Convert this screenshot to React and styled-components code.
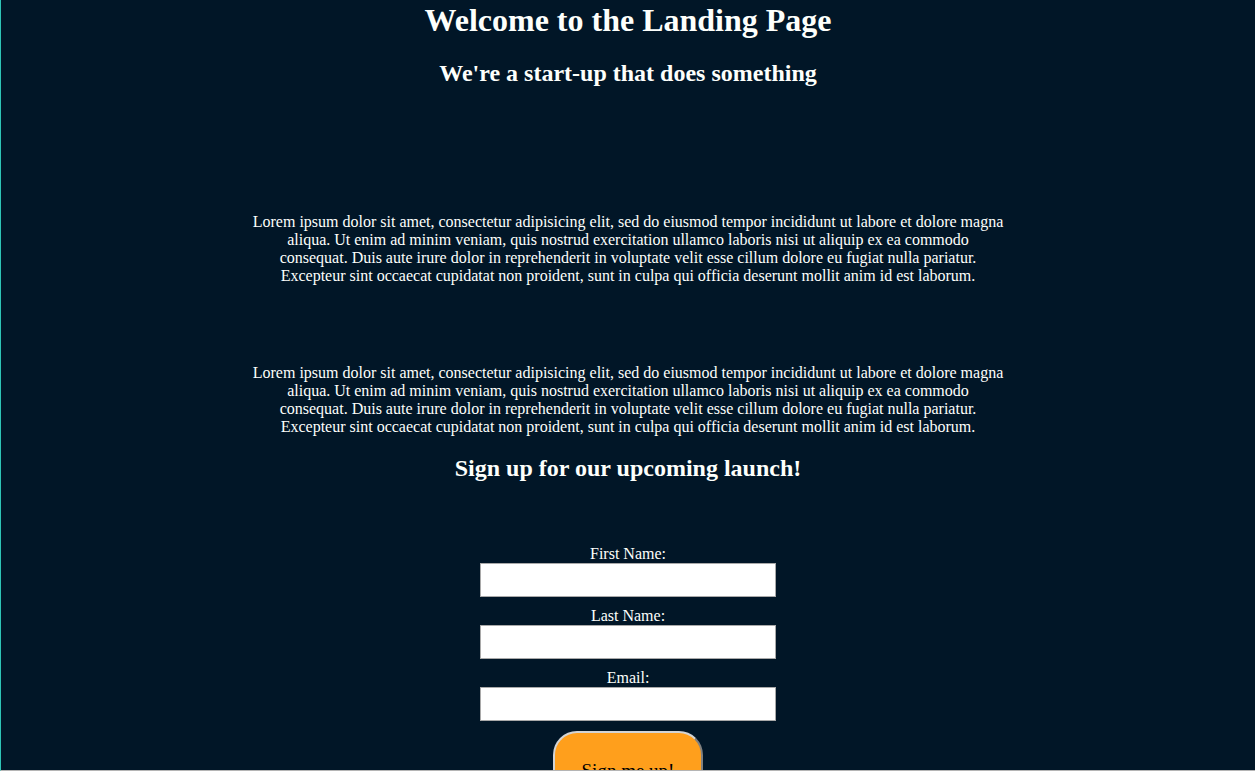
import React from 'react'
import styled, { createGlobalStyle } from 'styled-components'

const colors = {
  navy: '#011627',
  white: '#fdfffc',
  teal: '#2ec4b6',
  orange: '#ff9f1c'
}

const GlobalStyle = createGlobalStyle`
  html {
    height: 100%;
    overflow: hidden;
  }

  body {
    margin: 0;
    height: 100%;
    box-sizing: border-box;
    overflow: hidden;
    background-color: ${colors.navy};
    border-left: 1px solid ${colors.teal};
    border-bottom: 1px solid #b5b5b5;
    color: ${colors.white};
    font-family: 'Liberation Serif', 'Times New Roman', serif;
  }
`

const Page = styled.main`
  display: flex;
  flex-direction: column;
  align-items: center;
  text-align: center;
  padding-top: 2px;
`

const Title = styled.h1`
  font-size: 32px;
  margin: 0;
`

const Subtitle = styled.h2`
  font-size: 24px;
  margin: ${({ top }) => top} 0 0;
`

const Text = styled.p`
  width: 60%;
  font-size: 16px;
  margin: ${({ top }) => top} 0 0;
`

const Form = styled.form`
  display: flex;
  flex-direction: column;
  align-items: center;
  margin-top: 63px;
`

const Field = styled.div`
  display: flex;
  flex-direction: column;
  align-items: center;
  margin-bottom: 10px;
`

const Label = styled.label`
  font-size: 16px;
`

const Input = styled.input`
  box-sizing: border-box;
  width: 296px;
  height: 34px;
  border: 1px solid #a9a9a9;
  background: #ffffff;
  outline: none;
`

const Button = styled.button`
  background-color: ${colors.orange};
  border: 2px outset #d4d4d4;
  border-radius: 24px;
  color: #000000;
  font-family: inherit;
  font-size: 19px;
  padding: 27px 27px 26px;
  cursor: pointer;
`

const lorem =
  'Lorem ipsum dolor sit amet, consectetur adipisicing elit, sed do eiusmod tempor incididunt ut labore et dolore magna aliqua. Ut enim ad minim veniam, quis nostrud exercitation ullamco laboris nisi ut aliquip ex ea commodo consequat. Duis aute irure dolor in reprehenderit in voluptate velit esse cillum dolore eu fugiat nulla pariatur. Excepteur sint occaecat cupidatat non proident, sunt in culpa qui officia deserunt mollit anim id est laborum.'

const fields = [
  { id: 'first', label: 'First Name:', type: 'text' },
  { id: 'last', label: 'Last Name:', type: 'text' },
  { id: 'email', label: 'Email:', type: 'email' }
]

export default function App() {
  return (
    <>
      <GlobalStyle />
      <Page>
        <Title>Welcome to the Landing Page</Title>
        <Subtitle top="21.44px">We're a start-up that does something</Subtitle>
        <Text top="126px">{lorem}</Text>
        <Text top="79px">{lorem}</Text>
        <Subtitle top="19px">Sign up for our upcoming launch!</Subtitle>
        <Form onSubmit={e => e.preventDefault()}>
          {fields.map(field => (
            <Field key={field.id}>
              <Label htmlFor={field.id}>{field.label}</Label>
              <Input id={field.id} type={field.type} />
            </Field>
          ))}
          <Button type="submit">Sign me up!</Button>
        </Form>
      </Page>
    </>
  )
}
